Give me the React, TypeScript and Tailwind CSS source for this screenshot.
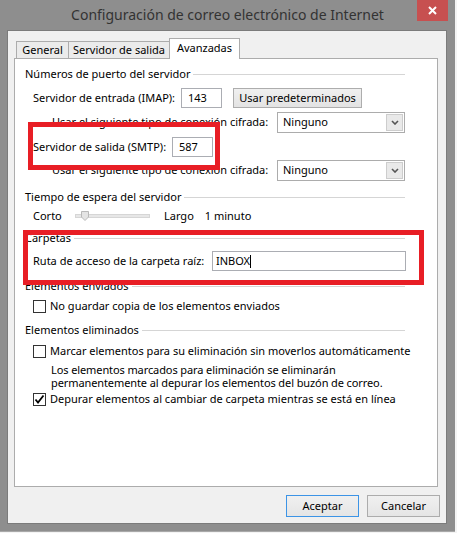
import React from "react";

function GroupHeader({ label }: { label: string }) {
  return (
    <div className="flex items-center h-[14px] gap-[3px]">
      <span className="whitespace-nowrap">{label}</span>
      <div className="flex-1 h-px bg-[#d5d5d5]" />
    </div>
  );
}

function TextBox({ value, className, caret }: { value: string; className: string; caret?: boolean }) {
  return (
    <div className={`shrink-0 flex items-center h-[20px] bg-white border border-[#abadb3] ${className}`}>
      <span>{value}</span>
      {caret && <span className="w-px h-[13px] bg-black" />}
    </div>
  );
}

function Combo() {
  return (
    <div className="shrink-0 ml-auto w-[128px] h-[21px] bg-white border border-[#acacac] flex items-center pl-[5px] pr-px">
      <span>Ninguno</span>
      <div className="ml-auto w-[17px] h-[17px] bg-[#e9e9e9] border border-[#cdcdcd] flex items-center justify-center">
        <svg width="8" height="5" viewBox="0 0 8 5">
          <path d="M1 1 L4 4 L7 1" fill="none" stroke="#555" strokeWidth="1.6" />
        </svg>
      </div>
    </div>
  );
}

function CheckBox({ checked, label }: { checked?: boolean; label: string }) {
  return (
    <div className="flex items-center h-[14px] pl-[8px] gap-[4px]">
      <div className="shrink-0 w-[13px] h-[13px] border border-[#333] bg-white flex items-center justify-center">
        {checked && (
          <svg width="11" height="11" viewBox="0 0 11 11">
            <path d="M1.5 5.5 L4 8.5 L9.5 1.5" fill="none" stroke="#000" strokeWidth="1.8" />
          </svg>
        )}
      </div>
      <span className="whitespace-nowrap">{label}</span>
    </div>
  );
}

const deleteNote =
  "Los elementos marcados para eliminación se eliminarán\npermanentemente al depurar los elementos del buzón de correo.";

export default function App() {
  return (
    <div
      className="w-[457px] h-[533px] bg-[#f4f4f4] overflow-hidden relative text-[11px] text-black"
      style={{ fontFamily: '"Noto Sans", "Open Sans", sans-serif' }}
    >
      <div className="w-[455px] h-[532px] bg-[#8e8e8e] flex flex-col relative border-b border-[#a9a9a9]">
        {/* title bar */}
        <div className="h-[30px] flex items-center justify-center relative">
          <span className="text-[14px] text-[#333] leading-none">
            Configuración de correo electrónico de Internet
          </span>
          <div className="absolute right-[7px] top-0 w-[31px] h-[21px] bg-[#c75050] flex items-center justify-center">
            <svg width="9" height="9" viewBox="0 0 9 9">
              <path d="M1 1 L8 8 M8 1 L1 8" stroke="#fff" strokeWidth="2" />
            </svg>
          </div>
        </div>

        {/* client area */}
        <div className="ml-[7px] w-[440px] h-[494px] border border-[#7b7b7b] bg-[#f0f0f0] pt-[7px] pl-[6px] flex flex-col">
          {/* tabs */}
          <div className="flex items-end h-[20px] pl-[2px]">
            <div className="w-[53px] h-[17px] border-l border-t border-r border-[#acacac] bg-[#ebebeb] flex items-center justify-center">
              General
            </div>
            <div className="w-[101px] h-[17px] border-t border-r border-[#acacac] bg-[#ebebeb] flex items-center justify-center">
              Servidor de salida
            </div>
            <div className="w-[71px] h-[21px] -ml-px -mb-px relative z-10 border-l border-t border-r border-[#acacac] bg-white flex items-center justify-center pb-[2px]">
              Avanzadas
            </div>
          </div>

          {/* tab page */}
          <div className="w-[424px] h-[429px] border border-[#acacac] bg-white pl-[10px] pr-[32px] pt-[8px] flex flex-col">
            <GroupHeader label="Números de puerto del servidor" />
            <div className="flex items-center h-[20px] mt-[7px] pl-[8px]">
              <span className="w-[148px] shrink-0 whitespace-nowrap">Servidor de entrada (IMAP):</span>
              <TextBox value="143" className="w-[41px] pl-[6px]" />
              <div className="shrink-0 ml-[11px] w-[129px] h-[20px] border border-[#adadad] bg-linear-to-b from-[#f0f0f0] to-[#e3e3e3] flex items-center justify-center">
                Usar predeterminados
              </div>
            </div>
            <div className="flex items-center h-[21px] mt-[4px] pl-[27px]">
              <span className="whitespace-nowrap">Usar el siguiente tipo de conexión cifrada:</span>
              <Combo />
            </div>
            <div className="flex items-center h-[20px] mt-[4px] pl-[8px]">
              <span className="w-[139px] shrink-0 whitespace-nowrap">Servidor de salida (SMTP):</span>
              <TextBox value="587" className="w-[41px] pl-[6px]" />
            </div>
            <div className="flex items-center h-[21px] mt-[3px] pl-[27px]">
              <span className="whitespace-nowrap">Usar el siguiente tipo de conexión cifrada:</span>
              <Combo />
            </div>

            <div className="mt-[9px]">
              <GroupHeader label="Tiempo de espera del servidor" />
            </div>
            <div className="flex items-center h-[14px] mt-[5px] pl-[8px]">
              <span className="w-[42px]">Corto</span>
              <div className="relative w-[75px] h-[4px] bg-[#e7e7e7] border border-[#d6d6d6]">
                <svg className="absolute left-[5px] -top-[4px]" width="8" height="10" viewBox="0 0 8 10">
                  <path d="M0.5 0.5 H7.5 V6 L4 9.5 L0.5 6 Z" fill="#e4e4e4" stroke="#b9b9b9" />
                </svg>
              </div>
              <span className="ml-[14px]">Largo</span>
              <span className="ml-[11px]">1 minuto</span>
            </div>

            <div className="mt-[8px]">
              <GroupHeader label="Carpetas" />
            </div>
            <div className="flex items-center h-[20px] mt-[6px] pl-[8px]">
              <span className="w-[179px] shrink-0 whitespace-nowrap">Ruta de acceso de la carpeta raíz:</span>
              <TextBox value="INBOX" caret className="w-[194px] pl-[3px]" />
            </div>

            <div className="mt-[8px]">
              <GroupHeader label="Elementos enviados" />
            </div>
            <div className="mt-[6px]">
              <CheckBox label="No guardar copia de los elementos enviados" />
            </div>

            <div className="mt-[10px]">
              <GroupHeader label="Elementos eliminados" />
            </div>
            <div className="mt-[7px]">
              <CheckBox label="Marcar elementos para su eliminación sin moverlos automáticamente" />
            </div>
            <div className="mt-[5px] pl-[26px] leading-[13px] tracking-[-0.1px] whitespace-pre-line">
              {deleteNote}
            </div>
            <div className="mt-[3px]">
              <CheckBox checked label="Depurar elementos al cambiar de carpeta mientras se está en línea" />
            </div>
          </div>

          {/* buttons */}
          <div className="flex justify-end gap-[8px] mt-[8px] pr-[6px]">
            <div className="w-[73px] h-[22px] border border-[#3c94e6] bg-linear-to-b from-[#f0f0f0] to-[#e5e5e5] flex items-center justify-center">
              Aceptar
            </div>
            <div className="w-[73px] h-[22px] border border-[#acacac] bg-linear-to-b from-[#f0f0f0] to-[#e5e5e5] flex items-center justify-center">
              Cancelar
            </div>
          </div>
        </div>
      </div>

      {/* red annotation boxes */}
      <div className="absolute left-[28px] top-[122px] w-[192px] h-[48px] border-[5px] border-[#e81e25] pointer-events-none" />
      <div className="absolute left-[23px] top-[230px] w-[401px] h-[55px] border-[5px] border-[#e81e25] pointer-events-none" />
    </div>
  );
}
